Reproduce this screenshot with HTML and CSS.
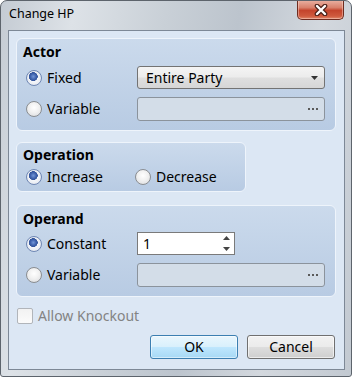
FILE: index.html
```html
<!DOCTYPE html>
<html lang="en">
<head>
  <meta charset="UTF-8">
  <title>Change HP</title>
  <link rel="stylesheet" href="styles.css">
</head>
<body>
  <div class="window">
    <div class="titlebar">
      <span class="title">Change HP</span>
      <div class="close">
        <svg width="14" height="12" viewBox="0 0 14 12">
          <path d="M3 2 L11 10 M11 2 L3 10" stroke="#4a2018" stroke-width="4.6" stroke-linecap="round"/>
          <path d="M3 2 L11 10 M11 2 L3 10" stroke="#fff" stroke-width="2.4" stroke-linecap="round"/>
        </svg>
      </div>
    </div>

    <div class="client">
      <!-- Actor -->
      <div class="group actor">
        <div class="group-title">Actor</div>
        <div class="rows">
          <label class="opt"><span class="radio checked"></span>Fixed</label>
          <div class="combo">
            <span>Entire Party</span>
            <svg width="7" height="4" viewBox="0 0 7 4"><path d="M0 0 H7 L3.5 4 Z" fill="#333"/></svg>
          </div>
          <label class="opt"><span class="radio"></span>Variable</label>
          <div class="picker">
            <svg width="10" height="2" viewBox="0 0 10 2"><rect x="0" width="2" height="2" fill="#5a5a5a"/><rect x="4" width="2" height="2" fill="#5a5a5a"/><rect x="8" width="2" height="2" fill="#5a5a5a"/></svg>
          </div>
        </div>
      </div>

      <!-- Operation -->
      <div class="group operation">
        <div class="group-title">Operation</div>
        <div class="rows pair">
          <label class="opt"><span class="radio checked"></span>Increase</label>
          <label class="opt"><span class="radio"></span>Decrease</label>
        </div>
      </div>

      <!-- Operand -->
      <div class="group operand">
        <div class="group-title">Operand</div>
        <div class="rows">
          <label class="opt"><span class="radio checked"></span>Constant</label>
          <div class="spin">
            <span>1</span>
            <div class="spin-arrows">
              <svg width="7" height="4" viewBox="0 0 7 4"><path d="M0 4 H7 L3.5 0 Z" fill="#444"/></svg>
              <svg width="7" height="4" viewBox="0 0 7 4"><path d="M0 0 H7 L3.5 4 Z" fill="#444"/></svg>
            </div>
          </div>
          <label class="opt"><span class="radio"></span>Variable</label>
          <div class="picker">
            <svg width="10" height="2" viewBox="0 0 10 2"><rect x="0" width="2" height="2" fill="#5a5a5a"/><rect x="4" width="2" height="2" fill="#5a5a5a"/><rect x="8" width="2" height="2" fill="#5a5a5a"/></svg>
          </div>
        </div>
      </div>

      <label class="check"><span class="box"></span>Allow Knockout</label>

      <div class="buttons">
        <div class="btn default">OK</div>
        <div class="btn">Cancel</div>
      </div>
    </div>
  </div>
</body>
</html>
```

FILE: styles.css
```css
body {
    margin: 0;
    background: #ffffff;
}

.window {
    box-sizing: border-box;
    width: 352px;
    height: 377px;
    display: flex;
    flex-direction: column;
    border: 1px solid #5d646c;
    border-radius: 7px 7px 3px 3px;
    background: linear-gradient(100deg, #c4cbd3 0%, #dde2e7 18%, #c9d0d7 40%, #bcc4cd 58%, #d3d8de 78%, #c2c9d1 100%);
    font-family: "Noto Sans", "Liberation Sans", sans-serif;
    color: #000;
    overflow: hidden;
}

.titlebar {
    height: 29px;
    display: flex;
    justify-content: space-between;
    align-items: flex-start;
    flex-shrink: 0;
}
.title {
    margin: 4px 0 0 8px;
    font-size: 12.5px;
    line-height: 18px;
}
.close {
    box-sizing: border-box;
    width: 47px;
    height: 20px;
    margin: -1px 7px 0 0;
    display: flex;
    justify-content: center;
    align-items: center;
    border: 1px solid #6e2c20;
    border-top: none;
    border-radius: 0 0 5px 5px;
    background: linear-gradient(#eab3a4 0%, #d8806b 40%, #c4442c 55%, #cf5a3e 85%, #e08a6c 100%);
    box-shadow: inset 0 0 0 1px rgba(255, 220, 210, 0.45);
}

.client {
    flex: 1;
    margin: 0 6px 6px 7px;
    padding: 7px 8px 10px 7px;
    border: 1px solid #7d8896;
    background: #dce7f4;
    display: flex;
    flex-direction: column;
    font-size: 14px;
}

.group {
    box-sizing: border-box;
    border: 1px solid #eef4fb;
    border-radius: 6px;
    background: linear-gradient(#cbdaec, #b8cbe3);
    padding: 4px 10px 9px 6px;
}
.operation {
    width: 230px;
    margin-top: 11px;
    padding-top: 3px;
    padding-bottom: 6px;
}
.operand {
    margin-top: 13px;
}

.group-title {
    font-weight: 700;
    line-height: 18px;
    height: 18px;
}

.rows {
    display: grid;
    grid-template-columns: 111px 1fr;
    grid-template-rows: 23px 24px;
    row-gap: 8px;
    align-items: center;
    padding-left: 3px;
    margin-top: 5px;
}
.operand .rows {
    margin-top: 4px;
}
.rows.pair {
    grid-template-columns: 109px 1fr;
    grid-template-rows: 16px;
}

.opt {
    display: flex;
    align-items: center;
    gap: 5px;
    line-height: 18px;
}

.radio {
    box-sizing: border-box;
    width: 16px;
    height: 16px;
    border-radius: 50%;
    border: 1px solid #8a8d91;
    background: radial-gradient(circle at 50% 40%, #ffffff 0%, #f1f1f1 45%, #d7d9dc 100%);
    flex-shrink: 0;
}
.radio.checked {
    border-color: #6f87b4;
    background:
        radial-gradient(circle at 45% 40%, #7497d8 0%, #3f62ad 2.8px, #34559c 4.2px, rgba(0,0,0,0) 4.6px),
        radial-gradient(circle, #ffffff 0%, #eef1f6 55%, #d4d9e2 100%);
}

.combo {
    box-sizing: border-box;
    height: 23px;
    display: flex;
    justify-content: space-between;
    align-items: center;
    padding: 0 6px 0 8px;
    border: 1px solid #737373;
    border-radius: 3px;
    background: linear-gradient(#f4f4f4 0%, #ececec 48%, #dfdfdf 52%, #d6d6d6 100%);
    line-height: 18px;
}

.picker {
    box-sizing: border-box;
    height: 24px;
    display: flex;
    justify-content: flex-end;
    align-items: center;
    padding-right: 6px;
    border: 1px solid #8b939c;
    border-radius: 3px;
    background: #d3dde8;
}

.spin {
    box-sizing: border-box;
    width: 98px;
    height: 23px;
    display: flex;
    justify-content: space-between;
    align-items: center;
    padding: 0 4px 0 5px;
    border: 1px solid #7a7a7a;
    background: #ffffff;
    line-height: 18px;
}
.spin-arrows {
    display: flex;
    flex-direction: column;
    gap: 7px;
}
.spin-arrows svg {
    display: block;
}

.check {
    display: flex;
    align-items: center;
    gap: 5px;
    margin: 11px 0 0 1px;
    height: 16px;
    color: #838383;
    line-height: 18px;
}
.box {
    box-sizing: border-box;
    width: 16px;
    height: 16px;
    border: 1px solid #b1b5ba;
    border-radius: 2px;
    background: linear-gradient(#f2f2f2, #fbfbfb);
}

.buttons {
    display: flex;
    justify-content: flex-end;
    gap: 9px;
    margin: 11px 1px 0 0;
}
.btn {
    box-sizing: border-box;
    width: 88px;
    height: 24px;
    display: flex;
    justify-content: center;
    align-items: center;
    border: 1px solid #707070;
    border-radius: 3px;
    background: linear-gradient(#f2f2f2 0%, #ebebeb 48%, #dddddd 52%, #cfcfcf 100%);
    box-shadow: inset 0 0 0 1px rgba(255, 255, 255, 0.6);
    line-height: 18px;
}
.btn.default {
    border-color: #3c7fb1;
    background: linear-gradient(#eaf6fd 0%, #d9f0fc 48%, #bee6fd 52%, #a7d9f5 100%);
    box-shadow: inset 0 0 0 1px rgba(255, 255, 255, 0.5);
}
```
